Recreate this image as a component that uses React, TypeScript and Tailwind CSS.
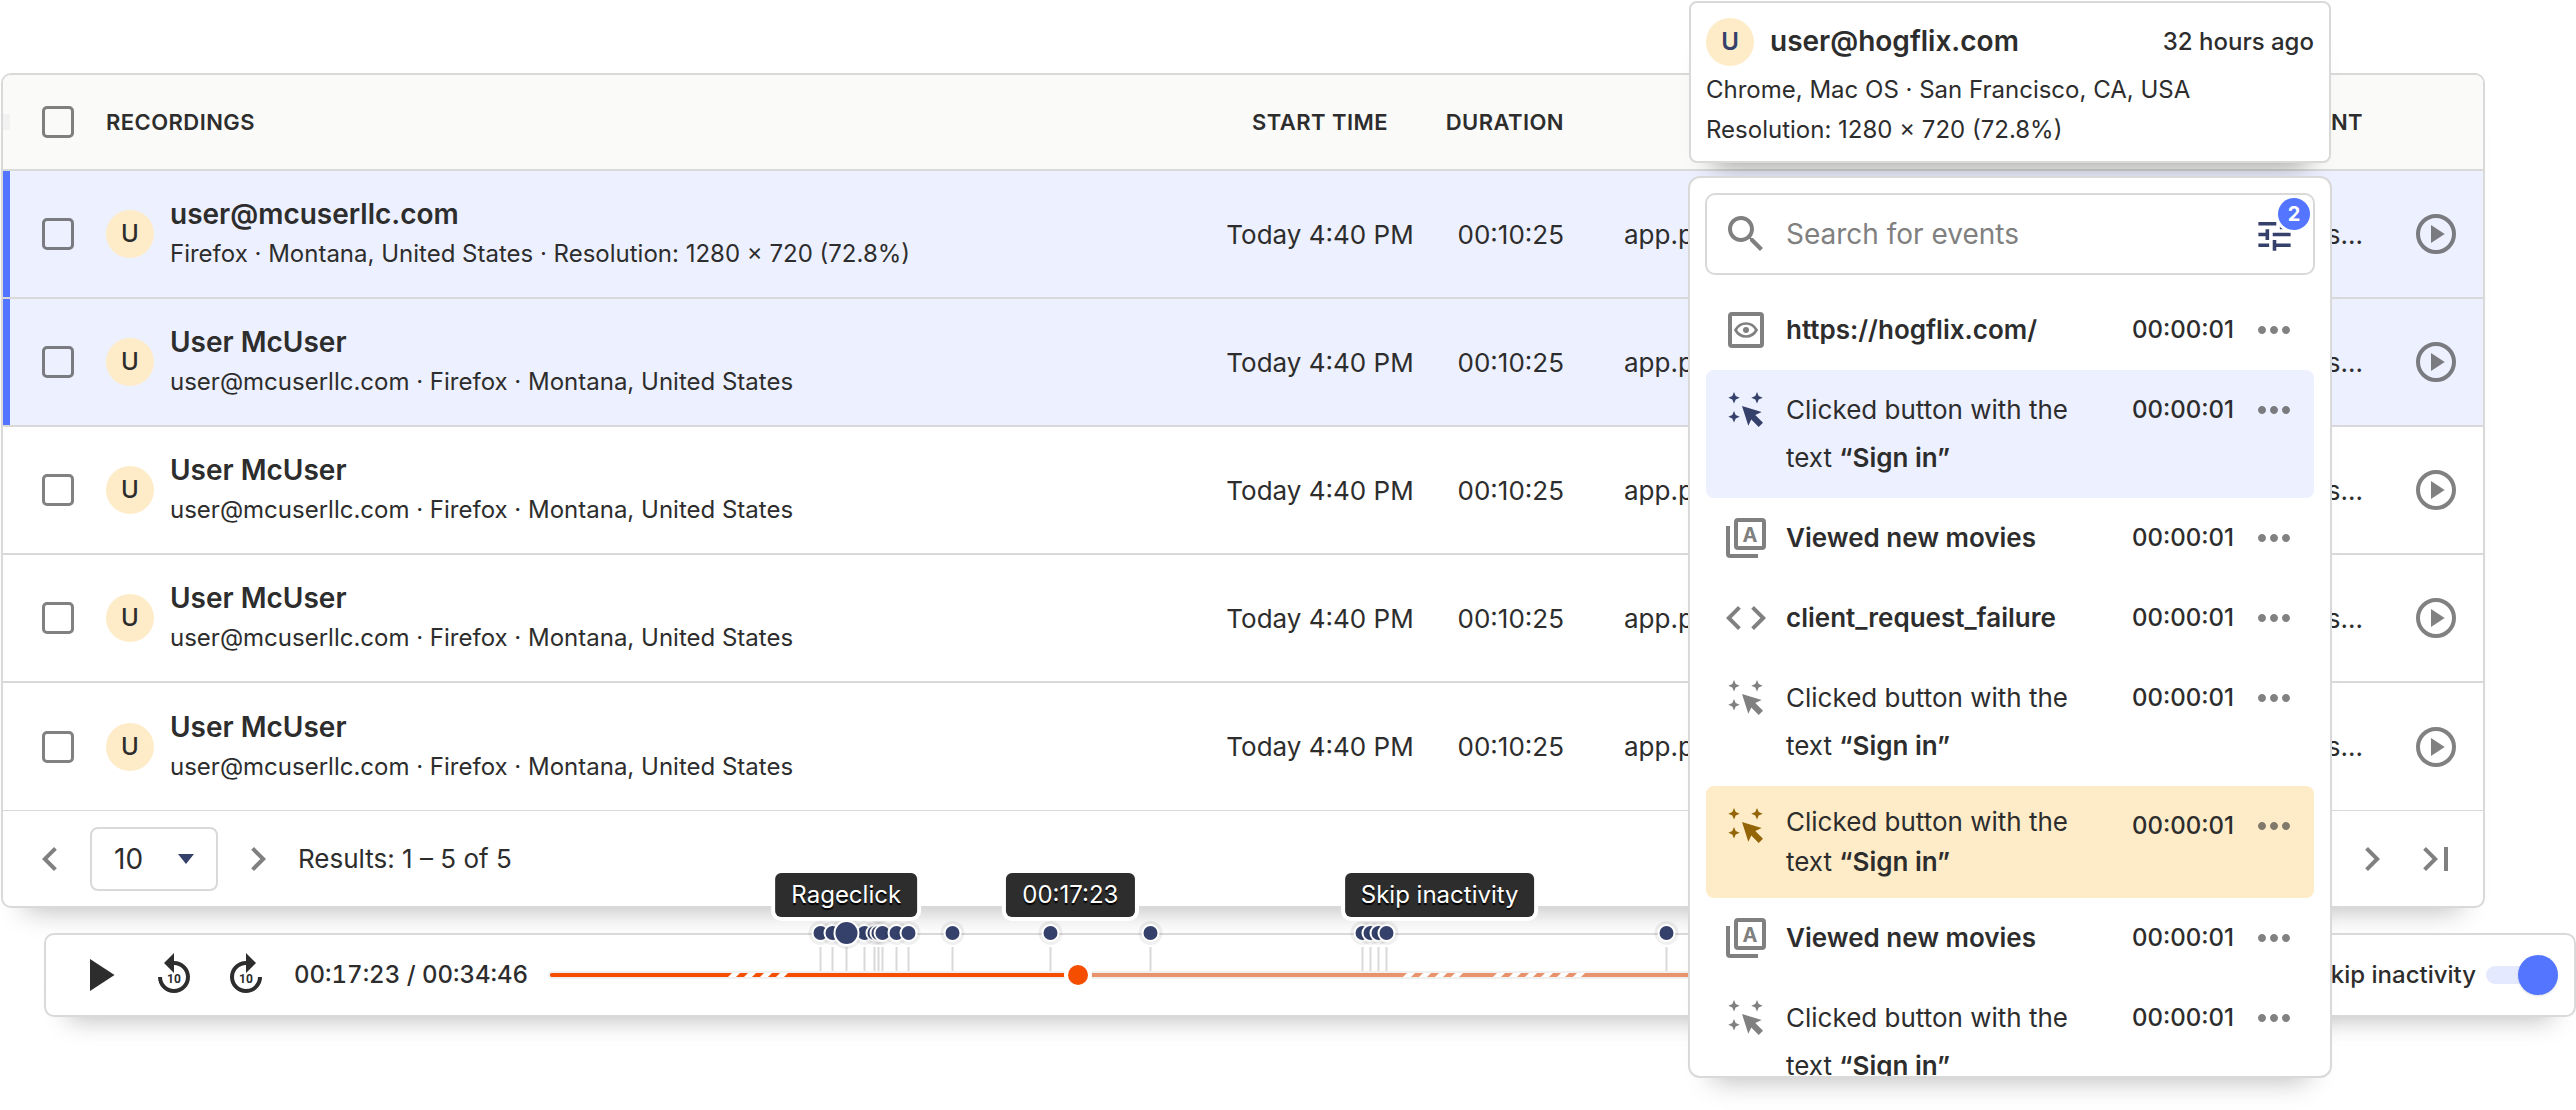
import { useState, type ReactNode } from "react";

type Recording = { name: string; detail: string; selected?: boolean };

const recordings: Recording[] = [
  {
    name: "user@mcuserllc.com",
    detail: "Firefox · Montana, United States · Resolution: 1280 × 720 (72.8%)",
    selected: true,
  },
  { name: "User McUser", detail: "user@mcuserllc.com · Firefox · Montana, United States", selected: true },
  { name: "User McUser", detail: "user@mcuserllc.com · Firefox · Montana, United States" },
  { name: "User McUser", detail: "user@mcuserllc.com · Firefox · Montana, United States" },
  { name: "User McUser", detail: "user@mcuserllc.com · Firefox · Montana, United States" },
];

type EventKind = "pageview" | "click" | "custom" | "code";
type Tone = "plain" | "selected" | "warning";
type EventItem = { kind: EventKind; label?: string; tone?: Tone };

const events: EventItem[] = [
  { kind: "pageview", label: "https://hogflix.com/" },
  { kind: "click", tone: "selected" },
  { kind: "custom", label: "Viewed new movies" },
  { kind: "code", label: "client_request_failure" },
  { kind: "click" },
  { kind: "click", tone: "warning" },
  { kind: "custom", label: "Viewed new movies" },
  { kind: "click" },
];

/* Timeline positions are on a 0..1740 scale. */
const TIMELINE = 1740;
const at = (value: number) => ({ left: `${(value / TIMELINE) * 100}%` });

const markers: { pos: number; large?: boolean }[] = [
  { pos: 270 },
  { pos: 282 },
  { pos: 314 },
  { pos: 324 },
  { pos: 328 },
  { pos: 332 },
  { pos: 346 },
  { pos: 358 },
  { pos: 296, large: true },
  { pos: 402 },
  { pos: 500 },
  { pos: 600 },
  { pos: 812 },
  { pos: 820 },
  { pos: 828 },
  { pos: 836 },
  { pos: 1116 },
];

const tooltips = [
  { pos: 296, text: "Rageclick" },
  { pos: 520, text: "00:17:23" },
  { pos: 889, text: "Skip inactivity" },
];

const skips = [
  { pos: 180, stripes: 4 },
  { pos: 854, stripes: 4 },
  { pos: 944, stripes: 6 },
];

function Glyph({ d, size = "size-12" }: { d: string; size?: string }) {
  return (
    <svg viewBox="0 0 24 24" className={`${size} shrink-0 fill-current`} aria-hidden="true">
      <path d={d} />
    </svg>
  );
}

const CHEVRON_LEFT = "M15.41 7.41 14 6l-6 6 6 6 1.41-1.41L10.83 12z";
const CHEVRON_RIGHT = "M10 6 8.59 7.41 13.17 12l-4.58 4.59L10 18l6-6z";
const LAST_PAGE = "M5.59 7.41 10.18 12l-4.59 4.59L7 18l6-6-6-6zM16 6h2v12h-2z";
const CODE = "M9.4 16.6 4.8 12l4.6-4.6L8 6l-6 6 6 6zm5.2 0 4.6-4.6-4.6-4.6L16 6l6 6-6 6z";
const SEARCH =
  "M15.5 14h-.79l-.28-.27C15.41 12.59 16 11.11 16 9.5 16 5.91 13.09 3 9.5 3S3 5.91 3 9.5 5.91 16 9.5 16c1.61 0 3.09-.59 4.23-1.57l.27.28v.79l5 4.99L20.49 19zm-6 0C7.01 14 5 11.99 5 9.5S7.01 5 9.5 5 14 7.01 14 9.5 11.99 14 9.5 14";
const TUNE =
  "M3 17v2h6v-2zM3 5v2h10V5zm10 16v-2h8v-2h-8v-2h-2v6zM7 9v2H3v2h4v2h2V9zm14 4v-2H11v2zm-6-4h2V7h4V5h-4V3h-2z";
const REPLAY =
  "M12 5V1L7 6l5 5V7c3.31 0 6 2.69 6 6s-2.69 6-6 6-6-2.69-6-6H4c0 4.42 3.58 8 8 8s8-3.58 8-8-3.58-8-8-8z";
const FORWARD =
  "M12 5V1l5 5-5 5V7c-3.31 0-6 2.69-6 6s2.69 6 6 6 6-2.69 6-6h2c0 4.42-3.58 8-8 8s-8-3.58-8-8 3.58-8 8-8z";
const MORE =
  "M6 10c-1.1 0-2 .9-2 2s.9 2 2 2 2-.9 2-2-.9-2-2-2m12 0c-1.1 0-2 .9-2 2s.9 2 2 2 2-.9 2-2-.9-2-2-2m-6 0c-1.1 0-2 .9-2 2s.9 2 2 2 2-.9 2-2-.9-2-2-2";

function Skip10({ d, label }: { d: string; label: string }) {
  return (
    <button type="button" aria-label={label} className="shrink-0">
      <svg viewBox="0 0 48 48" className="size-12 fill-current" aria-hidden="true">
        <path d={d} transform="scale(2)" />
        <text x="24" y="32" textAnchor="middle" className="font-['Roboto'] text-[12px] font-bold">
          10
        </text>
      </svg>
    </button>
  );
}

function EventIcon({ kind }: { kind: EventKind }) {
  if (kind === "code") return <Glyph d={CODE} />;
  const shapes: Record<Exclude<EventKind, "code">, ReactNode> = {
    pageview: (
      <g fill="none" stroke="currentColor">
        <rect x="8" y="8" width="32" height="32" rx="2" strokeWidth="4" />
        <path
          d="M13.5 24C16 19.5 20 17.5 24 17.5s8 2 10.5 6.500C32 28.5 28 30.5 24 30.5s-8-2-10.5-6.500z"
          strokeWidth="2.7"
        />
        <circle cx="24" cy="24" r="3" fill="currentColor" stroke="none" />
      </g>
    ),
    click: (
      <g fill="currentColor">
        <path d="M12 6l1.700 4 4 1.700-4 1.700-1.700 4-1.700-4-4-1.700 4-1.700z" />
        <path d="M35 6l1.700 4 4 1.700-4 1.700-1.700 4-1.700-4-4-1.700 4-1.700z" />
        <path d="M12 25l1.700 4 4 1.700-4 1.700-1.700 4-1.700-4-4-1.700 4-1.700z" />
        <path d="M20 20l19.700 6-6.400 3 7.700 7.700-4.300 4.300-7.400-7.400-3 6.200z" />
      </g>
    ),
    custom: (
      <g>
        <path d="M6 12v28q0 2 2 2h28" fill="none" stroke="currentColor" strokeWidth="4" />
        <rect x="14" y="6" width="28" height="28" rx="2" fill="none" stroke="currentColor" strokeWidth="4" />
        <text x="28" y="28" textAnchor="middle" fill="currentColor" className="text-[20px] font-bold">
          A
        </text>
      </g>
    ),
  };
  return (
    <svg viewBox="0 0 48 48" className="size-12 shrink-0" aria-hidden="true">
      {shapes[kind]}
    </svg>
  );
}

function Checkbox({ label }: { label: string }) {
  return (
    <input
      type="checkbox"
      aria-label={label}
      className="block size-8 appearance-none rounded-[5px] border-[3px] border-[#2d2d2d]/60"
    />
  );
}

function Avatar({ className }: { className: string }) {
  return (
    <span
      className={`flex size-12 shrink-0 items-center justify-center rounded-full bg-[#feecc8] text-2xl ${className}`}
    >
      U
    </span>
  );
}

function RecordingsTable() {
  const th = "border-b-2 border-[#d9d9d9] text-[22px] font-semibold tracking-[0.02em]";
  return (
    <section className="mr-[91px] ml-px rounded-[10px] border-2 border-[#d9d9d9] bg-white shadow-[0_26px_26px_-24px_rgba(0,0,0,0.28)]">
      <table className="w-full table-fixed border-separate border-spacing-0">
        <colgroup>
          <col className="w-[103px]" />
          <col />
          <col className="w-[244px]" />
          <col className="w-[152px]" />
          <col className="w-[386px]" />
          <col className="w-[409px]" />
          <col className="w-[94px]" />
        </colgroup>
        <thead className="bg-[#fafaf8]">
          <tr className="h-24">
            <th className={`${th} relative rounded-tl-lg pl-[39px]`}>
              <span className="absolute top-[39px] left-0 h-4 w-[7px] bg-[#f2f2f2]" />
              <Checkbox label="Select all recordings" />
            </th>
            <th className={`${th} text-left`}>RECORDINGS</th>
            <th className={`${th} text-center`}>START TIME</th>
            <th className={`${th} pr-[30px] text-right`}>DURATION</th>
            <th className={`${th} pr-[100px] text-right`}>ENTRY POINT</th>
            <th className={`${th} pr-[26px] text-right`}>EXIT POINT</th>
            <th className={`${th} rounded-tr-lg`} />
          </tr>
        </thead>
        <tbody className="text-[26px]">
          {recordings.map((rec, i) => {
            const bg = rec.selected ? "bg-[#edf1ff]" : "bg-white";
            const edge = i === recordings.length - 1 ? "border-b" : "border-b-2";
            const td = `${edge} border-[#d9d9d9]`;
            return (
              <tr key={i} className={`h-32 ${bg}`}>
                <td className={`${td} relative pl-[39px]`}>
                  {rec.selected && <span className="absolute inset-y-0 left-0 w-[7px] bg-[#5375ff]" />}
                  <Checkbox label={`Select recording ${i + 1}`} />
                </td>
                <td className={td}>
                  <div className="flex items-center gap-4">
                    <Avatar className="font-medium" />
                    <div className="whitespace-nowrap">
                      <p className="text-[28px] leading-10 font-semibold">{rec.name}</p>
                      <p className="text-2xl leading-10">{rec.detail}</p>
                    </div>
                  </div>
                </td>
                <td className={`${td} text-center`}>Today 4:40 PM</td>
                <td className={`${td} pr-[30px] text-right`}>00:10:25</td>
                <td className={`${td} pl-[30px]`}>app.posthog.com/ins...</td>
                <td className={`${td} pr-[26px] text-right`}>app.posthog.com/events...</td>
                <td className={td}>
                  <button type="button" aria-label="Play recording" className="mx-auto block text-[#2d2d2d]/60">
                    <svg viewBox="0 0 48 48" className="size-12" aria-hidden="true">
                      <circle cx="24" cy="24" r="18" fill="none" stroke="currentColor" strokeWidth="4" />
                      <path d="M19 15v18l13.700-9z" fill="currentColor" />
                    </svg>
                  </button>
                </td>
              </tr>
            );
          })}
        </tbody>
      </table>
      <footer className="flex h-[95px] items-center justify-between px-[23px]">
        <div className="flex items-center gap-4">
          <button type="button" aria-label="Previous page" className="text-[#808080]">
            <Glyph d={CHEVRON_LEFT} />
          </button>
          <div className="relative">
            <select
              aria-label="Rows per page"
              defaultValue="10"
              className="block h-16 w-32 appearance-none rounded-lg border-2 border-[#d9d9d9] bg-white pl-[22px] text-[28px]"
            >
              <option>10</option>
              <option>25</option>
            </select>
            <svg
              viewBox="0 0 16 10"
              className="pointer-events-none absolute top-[27px] right-6 h-2.5 w-4 fill-[#35416b]"
              aria-hidden="true"
            >
              <path d="M0 0h16L8 10z" />
            </svg>
          </div>
          <button type="button" aria-label="Next page" className="text-[#808080]">
            <Glyph d={CHEVRON_RIGHT} />
          </button>
          <p className="text-[26px]">Results: 1 – 5 of 5</p>
        </div>
        <div className="flex gap-4 text-[#808080]">
          <button type="button" aria-label="Next results">
            <Glyph d={CHEVRON_RIGHT} />
          </button>
          <button type="button" aria-label="Last results">
            <Glyph d={LAST_PAGE} />
          </button>
        </div>
      </footer>
    </section>
  );
}

function Timeline() {
  return (
    <div className="relative h-1 flex-1 rounded-full bg-[#e8936b] ring-2 ring-[#f0f0f0]">
      <div className="h-full rounded-full bg-[#f54e00]" style={{ width: `${(528 / TIMELINE) * 100}%` }} />
      {skips.map((skip) => (
        <div key={skip.pos} className="absolute top-0 flex h-1 gap-2" style={at(skip.pos)}>
          {Array.from({ length: skip.stripes }, (_, i) => (
            <span key={i} className="h-1 w-2 -skew-x-45 bg-white" />
          ))}
        </div>
      ))}
      {markers.map((m) => (
        <div
          key={m.pos}
          className="absolute bottom-[6px] flex h-10 w-px -translate-x-1/2 flex-col items-center"
          style={at(m.pos)}
        >
          <span className="absolute top-4 bottom-0 w-0.5 bg-[#d9d9d9]" />
          <span className="flex h-1 items-center justify-center">
            <span
              className={`relative shrink-0 rounded-full bg-[#35416b] shadow-[0_0_0_2px_#fff,0_0_0_5px_rgba(0,0,0,0.06)] ${
                m.large ? "size-[22px]" : "size-3.5"
              }`}
            />
          </span>
        </div>
      ))}
      <span
        className="absolute -top-2 size-5 -translate-x-1/2 rounded-full bg-[#f54e00] ring-4 ring-white"
        style={at(528)}
      />
      {tooltips.map((tip) => (
        <span
          key={tip.text}
          className="absolute -top-[100px] flex h-11 -translate-x-1/2 items-center rounded-md bg-[#2d2d2d] px-4 text-2xl whitespace-nowrap text-white ring-4 ring-white text-shadow-[0_2px_1px_#000]"
          style={at(tip.pos)}
        >
          {tip.text}
        </span>
      ))}
    </div>
  );
}

function Player() {
  return (
    <section className="relative ml-11 flex h-[84px] items-center gap-6 rounded-[10px] border-2 border-[#d9d9d9] bg-white pr-4 pl-8 shadow-[0_26px_26px_-24px_rgba(0,0,0,0.28)]">
      <button type="button" aria-label="Play" className="shrink-0">
        <svg viewBox="0 0 48 48" className="size-12 fill-current" aria-hidden="true">
          <path d="M12 8v32l24.500-16z" />
        </svg>
      </button>
      <Skip10 d={REPLAY} label="Back 10 seconds" />
      <Skip10 d={FORWARD} label="Forward 10 seconds" />
      <p className="w-[232px] shrink-0 text-2xl font-medium whitespace-nowrap tabular-nums">00:17:23 / 00:34:46</p>
      <Timeline />
      <label className="flex items-center gap-2.5 text-2xl font-medium whitespace-nowrap">
        Skip inactivity
        <input
          type="checkbox"
          role="switch"
          defaultChecked
          className="flex h-10 w-[72px] appearance-none items-center before:h-[18px] before:flex-1 before:rounded-full before:bg-[#e5e9ff] after:-ml-10 after:size-10 after:rounded-full after:bg-[#5375ff] after:shadow-sm"
        />
      </label>
    </section>
  );
}

function PersonCard() {
  return (
    <section className="mx-px mt-px h-[162px] rounded-lg border-2 border-[#d9d9d9] bg-white px-[15px] pt-[15px] text-2xl shadow-[0_26px_26px_-24px_rgba(0,0,0,0.4)]">
      <div className="mb-1 flex items-center gap-4">
        <Avatar className="font-semibold text-[#35416b]" />
        <h2 className="flex-1 text-[28px] font-semibold">user@hogflix.com</h2>
        <time className="font-medium">32 hours ago</time>
      </div>
      <p className="leading-10">Chrome, Mac OS · San Francisco, CA, USA</p>
      <p className="leading-10">Resolution: 1280 × 720 (72.8%)</p>
    </section>
  );
}

const rowTone: Record<Tone, string> = { plain: "", selected: "bg-[#edf1ff]", warning: "bg-[#feecc8]" };
const iconTone: Record<Tone, string> = {
  plain: "text-[#808080]",
  selected: "text-[#35416b]",
  warning: "text-[#946508]",
};

function EventRow({ kind, label, tone = "plain" }: EventItem) {
  const leading = tone === "warning" ? "leading-10" : "leading-[48px]";
  return (
    <li className={`flex items-start rounded-lg p-4 ${rowTone[tone]}`}>
      <span className={iconTone[tone]}>
        <EventIcon kind={kind} />
      </span>
      <div className={`ml-4 flex-1 text-[26px] ${leading}`}>
        {label ? (
          <p className="font-semibold">{label}</p>
        ) : (
          <p>
            Clicked button with the
            <br />
            text <b className="font-semibold">“Sign in”</b>
          </p>
        )}
      </div>
      <time className="mr-4 text-2xl leading-[47px] font-medium">00:00:01</time>
      <button type="button" aria-label="Event options" className="text-[#2d2d2d]/60">
        <Glyph d={MORE} />
      </button>
    </li>
  );
}

function EventsPanel() {
  const [query, setQuery] = useState("");
  return (
    <section className="h-[902px] rounded-xl border-2 border-[#d9d9d9] bg-white shadow-[0_26px_26px_-24px_rgba(0,0,0,0.28)]">
      <div className="h-full overflow-hidden px-[15px] pt-[15px]">
        <div className="relative flex h-[82px] items-center rounded-[10px] border-2 border-[#d9d9d9] pr-[17px] pl-[15px]">
          <span className="text-[#808080]">
            <Glyph d={SEARCH} />
          </span>
          <input
            type="text"
            aria-label="Search for events"
            placeholder="Search for events"
            value={query}
            onChange={(e) => setQuery(e.target.value)}
            className="ml-4 min-w-0 flex-1 text-[28px] outline-none placeholder:text-[#808080]"
          />
          <button type="button" aria-label="Filters, 2 active" className="text-[#35416b]">
            <Glyph d={TUNE} size="size-[43px]" />
            <span className="absolute top-[3px] right-[3px] flex size-8 items-center justify-center rounded-full bg-[#5375ff] text-xl font-bold text-white ring-[3px] ring-white">
              2
            </span>
          </button>
        </div>
        <ul className="mx-px mt-[15px]">
          {events.map((event, i) => (
            <EventRow key={i} {...event} />
          ))}
        </ul>
      </div>
    </section>
  );
}

export default function App() {
  return (
    <div className="relative min-h-screen overflow-hidden bg-white pt-[73px] font-['Inter',sans-serif] text-[#2d2d2d]">
      <main className="flex flex-col gap-[25px]">
        <RecordingsTable />
        <Player />
      </main>
      <aside className="absolute top-0 right-[244px] flex w-[644px] flex-col gap-[13px]">
        <PersonCard />
        <EventsPanel />
      </aside>
    </div>
  );
}
